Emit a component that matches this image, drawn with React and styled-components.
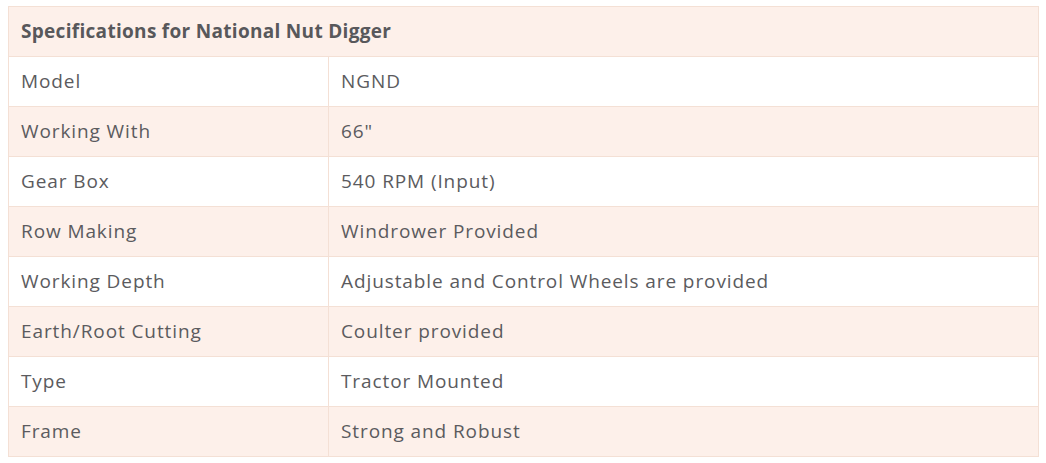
import React from "react";
import styled, { createGlobalStyle } from "styled-components";

const Global = createGlobalStyle`
  body {
    margin: 0;
    padding: 6px 8px;
    background: #ffffff;
    font-family: "Open Sans", "Liberation Sans", sans-serif;
  }
`;

const Table = styled.table`
  width: 1031px;
  border-collapse: collapse;
  table-layout: fixed;
  color: #5b5b5e;
  font-size: 19px;
  letter-spacing: 0.9px;
`;

const HeadCell = styled.th`
  height: 48px;
  padding: 0 12px 1px;
  text-align: left;
  font-weight: 700;
  letter-spacing: 0.3px;
  color: #58585b;
  background: #fdf0ea;
  border: 1px solid #f4e0d5;
`;

const Row = styled.tr`
  background: ${(p) => (p.$shaded ? "#fdf0ea" : "#ffffff")};
`;

const Cell = styled.td`
  height: 48px;
  padding: 0 12px 1px;
  border: 1px solid #f4e0d5;
`;

const specs = [
  ["Model", "NGND"],
  ["Working With", '66"'],
  ["Gear Box", "540 RPM (Input)"],
  ["Row Making", "Windrower Provided"],
  ["Working Depth", "Adjustable and Control Wheels are provided"],
  ["Earth/Root Cutting", "Coulter provided"],
  ["Type", "Tractor Mounted"],
  ["Frame", "Strong and Robust"],
];

const App = () => {
  return (
    <>
      <Global />
      <Table>
        <colgroup>
          <col style={{ width: "320px" }} />
          <col />
        </colgroup>
        <thead>
          <tr>
            <HeadCell colSpan={2}>Specifications for National Nut Digger</HeadCell>
          </tr>
        </thead>
        <tbody>
          {specs.map(([k, v], i) => (
            <Row key={k} $shaded={i % 2 === 1}>
              <Cell>{k}</Cell>
              <Cell>{v}</Cell>
            </Row>
          ))}
        </tbody>
      </Table>
    </>
  );
};

export default App;
